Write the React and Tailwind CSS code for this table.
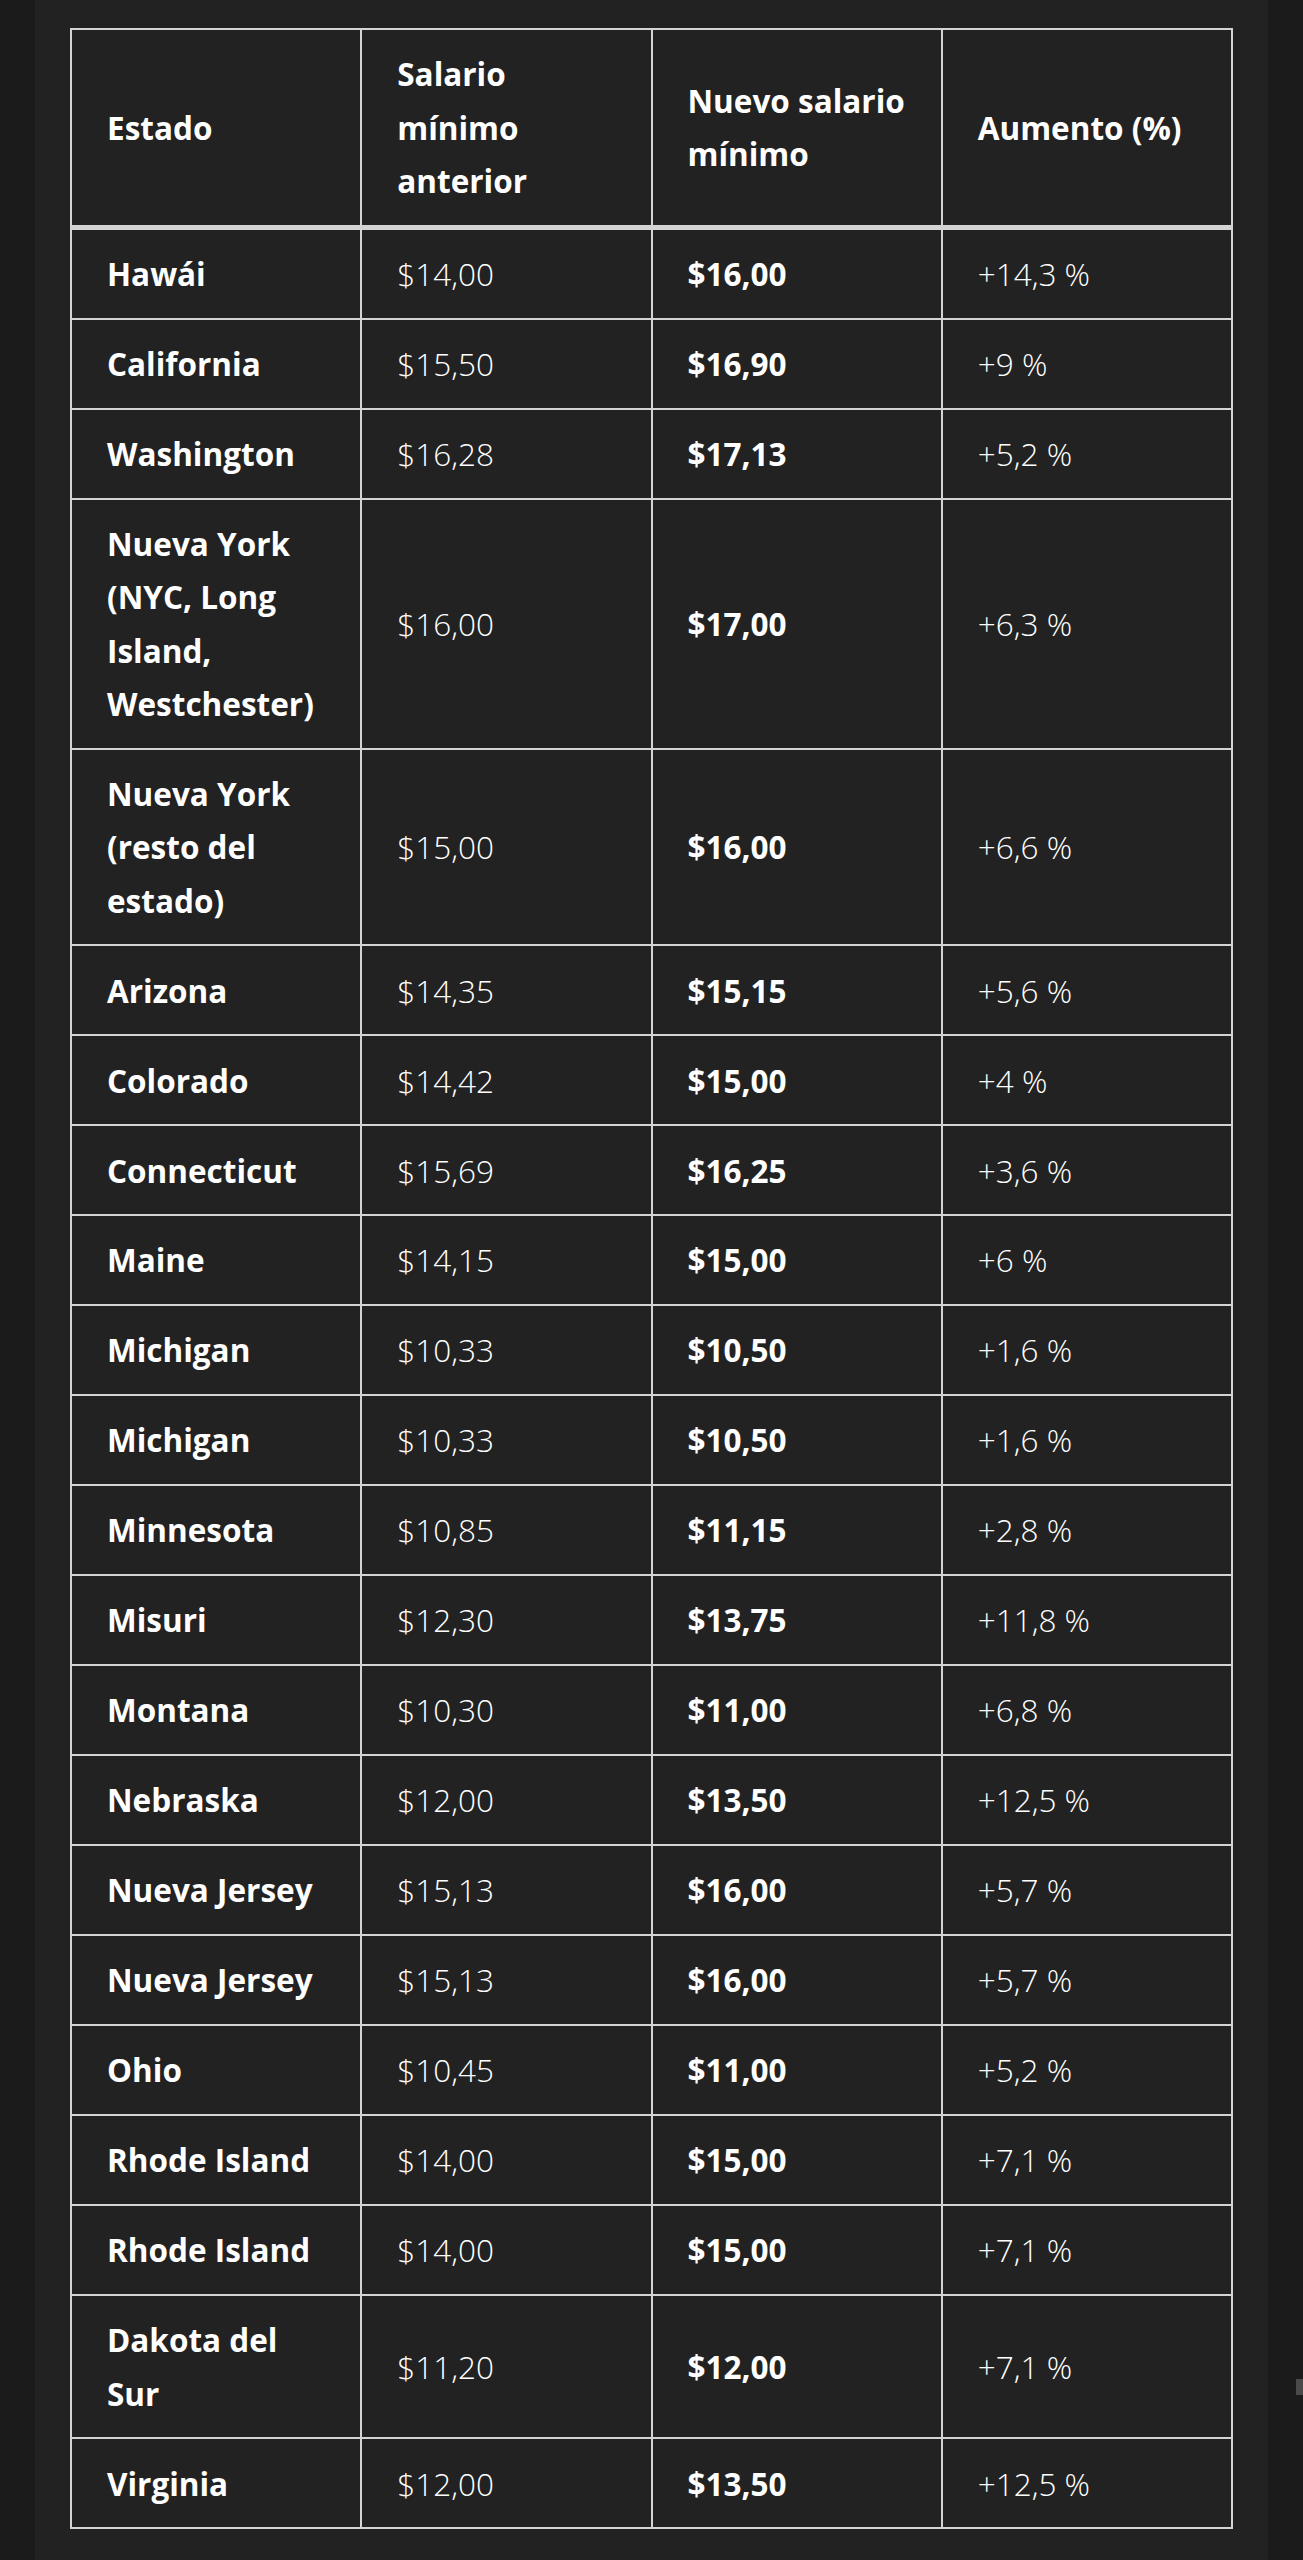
import React from 'react';

const headers = ['Estado', 'Salario mínimo anterior', 'Nuevo salario mínimo', 'Aumento (%)'];

const rows = [
  ['Hawái', '$14,00', '$16,00', '+14,3 %'],
  ['California', '$15,50', '$16,90', '+9 %'],
  ['Washington', '$16,28', '$17,13', '+5,2 %'],
  ['Nueva York (NYC, Long Island, Westchester)', '$16,00', '$17,00', '+6,3 %'],
  ['Nueva York (resto del estado)', '$15,00', '$16,00', '+6,6 %'],
  ['Arizona', '$14,35', '$15,15', '+5,6 %'],
  ['Colorado', '$14,42', '$15,00', '+4 %'],
  ['Connecticut', '$15,69', '$16,25', '+3,6 %'],
  ['Maine', '$14,15', '$15,00', '+6 %'],
  ['Michigan', '$10,33', '$10,50', '+1,6 %'],
  ['Michigan', '$10,33', '$10,50', '+1,6 %'],
  ['Minnesota', '$10,85', '$11,15', '+2,8 %'],
  ['Misuri', '$12,30', '$13,75', '+11,8 %'],
  ['Montana', '$10,30', '$11,00', '+6,8 %'],
  ['Nebraska', '$12,00', '$13,50', '+12,5 %'],
  ['Nueva Jersey', '$15,13', '$16,00', '+5,7 %'],
  ['Nueva Jersey', '$15,13', '$16,00', '+5,7 %'],
  ['Ohio', '$10,45', '$11,00', '+5,2 %'],
  ['Rhode Island', '$14,00', '$15,00', '+7,1 %'],
  ['Rhode Island', '$14,00', '$15,00', '+7,1 %'],
  ['Dakota del Sur', '$11,20', '$12,00', '+7,1 %'],
  ['Virginia', '$12,00', '$13,50', '+12,5 %'],
];

const cell = 'border-2 border-[#d4d4d4] px-[35px] py-[17.33px] text-left align-middle';

const App = () => {
  return (
    <div className="relative flex min-h-screen bg-[#1b1b1b] px-[35px] font-['Open_Sans',sans-serif]">
      <div className="flex-1 bg-[#222222] px-[35px] pt-[28px] pb-[31px]">
        <table className="w-full table-fixed border-collapse text-[31.5px] leading-[53.33px] text-white">
          <thead>
            <tr>
              {headers.map(h => (
                <th key={h} className={`${cell} border-b-[5px] font-bold`}>{h}</th>
              ))}
            </tr>
          </thead>
          <tbody>
            {rows.map((r, i) => (
              <tr key={i}>
                <td className={`${cell} font-bold`}>{r[0]}</td>
                <td className={`${cell} font-[350]`}>{r[1]}</td>
                <td className={`${cell} font-bold`}>{r[2]}</td>
                <td className={`${cell} font-[350]`}>{r[3]}</td>
              </tr>
            ))}
          </tbody>
        </table>
      </div>

      {/* little scroll handle on the right edge */}
      <div className="absolute right-0 top-[2379px] h-[16px] w-[7px] bg-[#4a4a4a]" />
    </div>
  );
};

export default App;
